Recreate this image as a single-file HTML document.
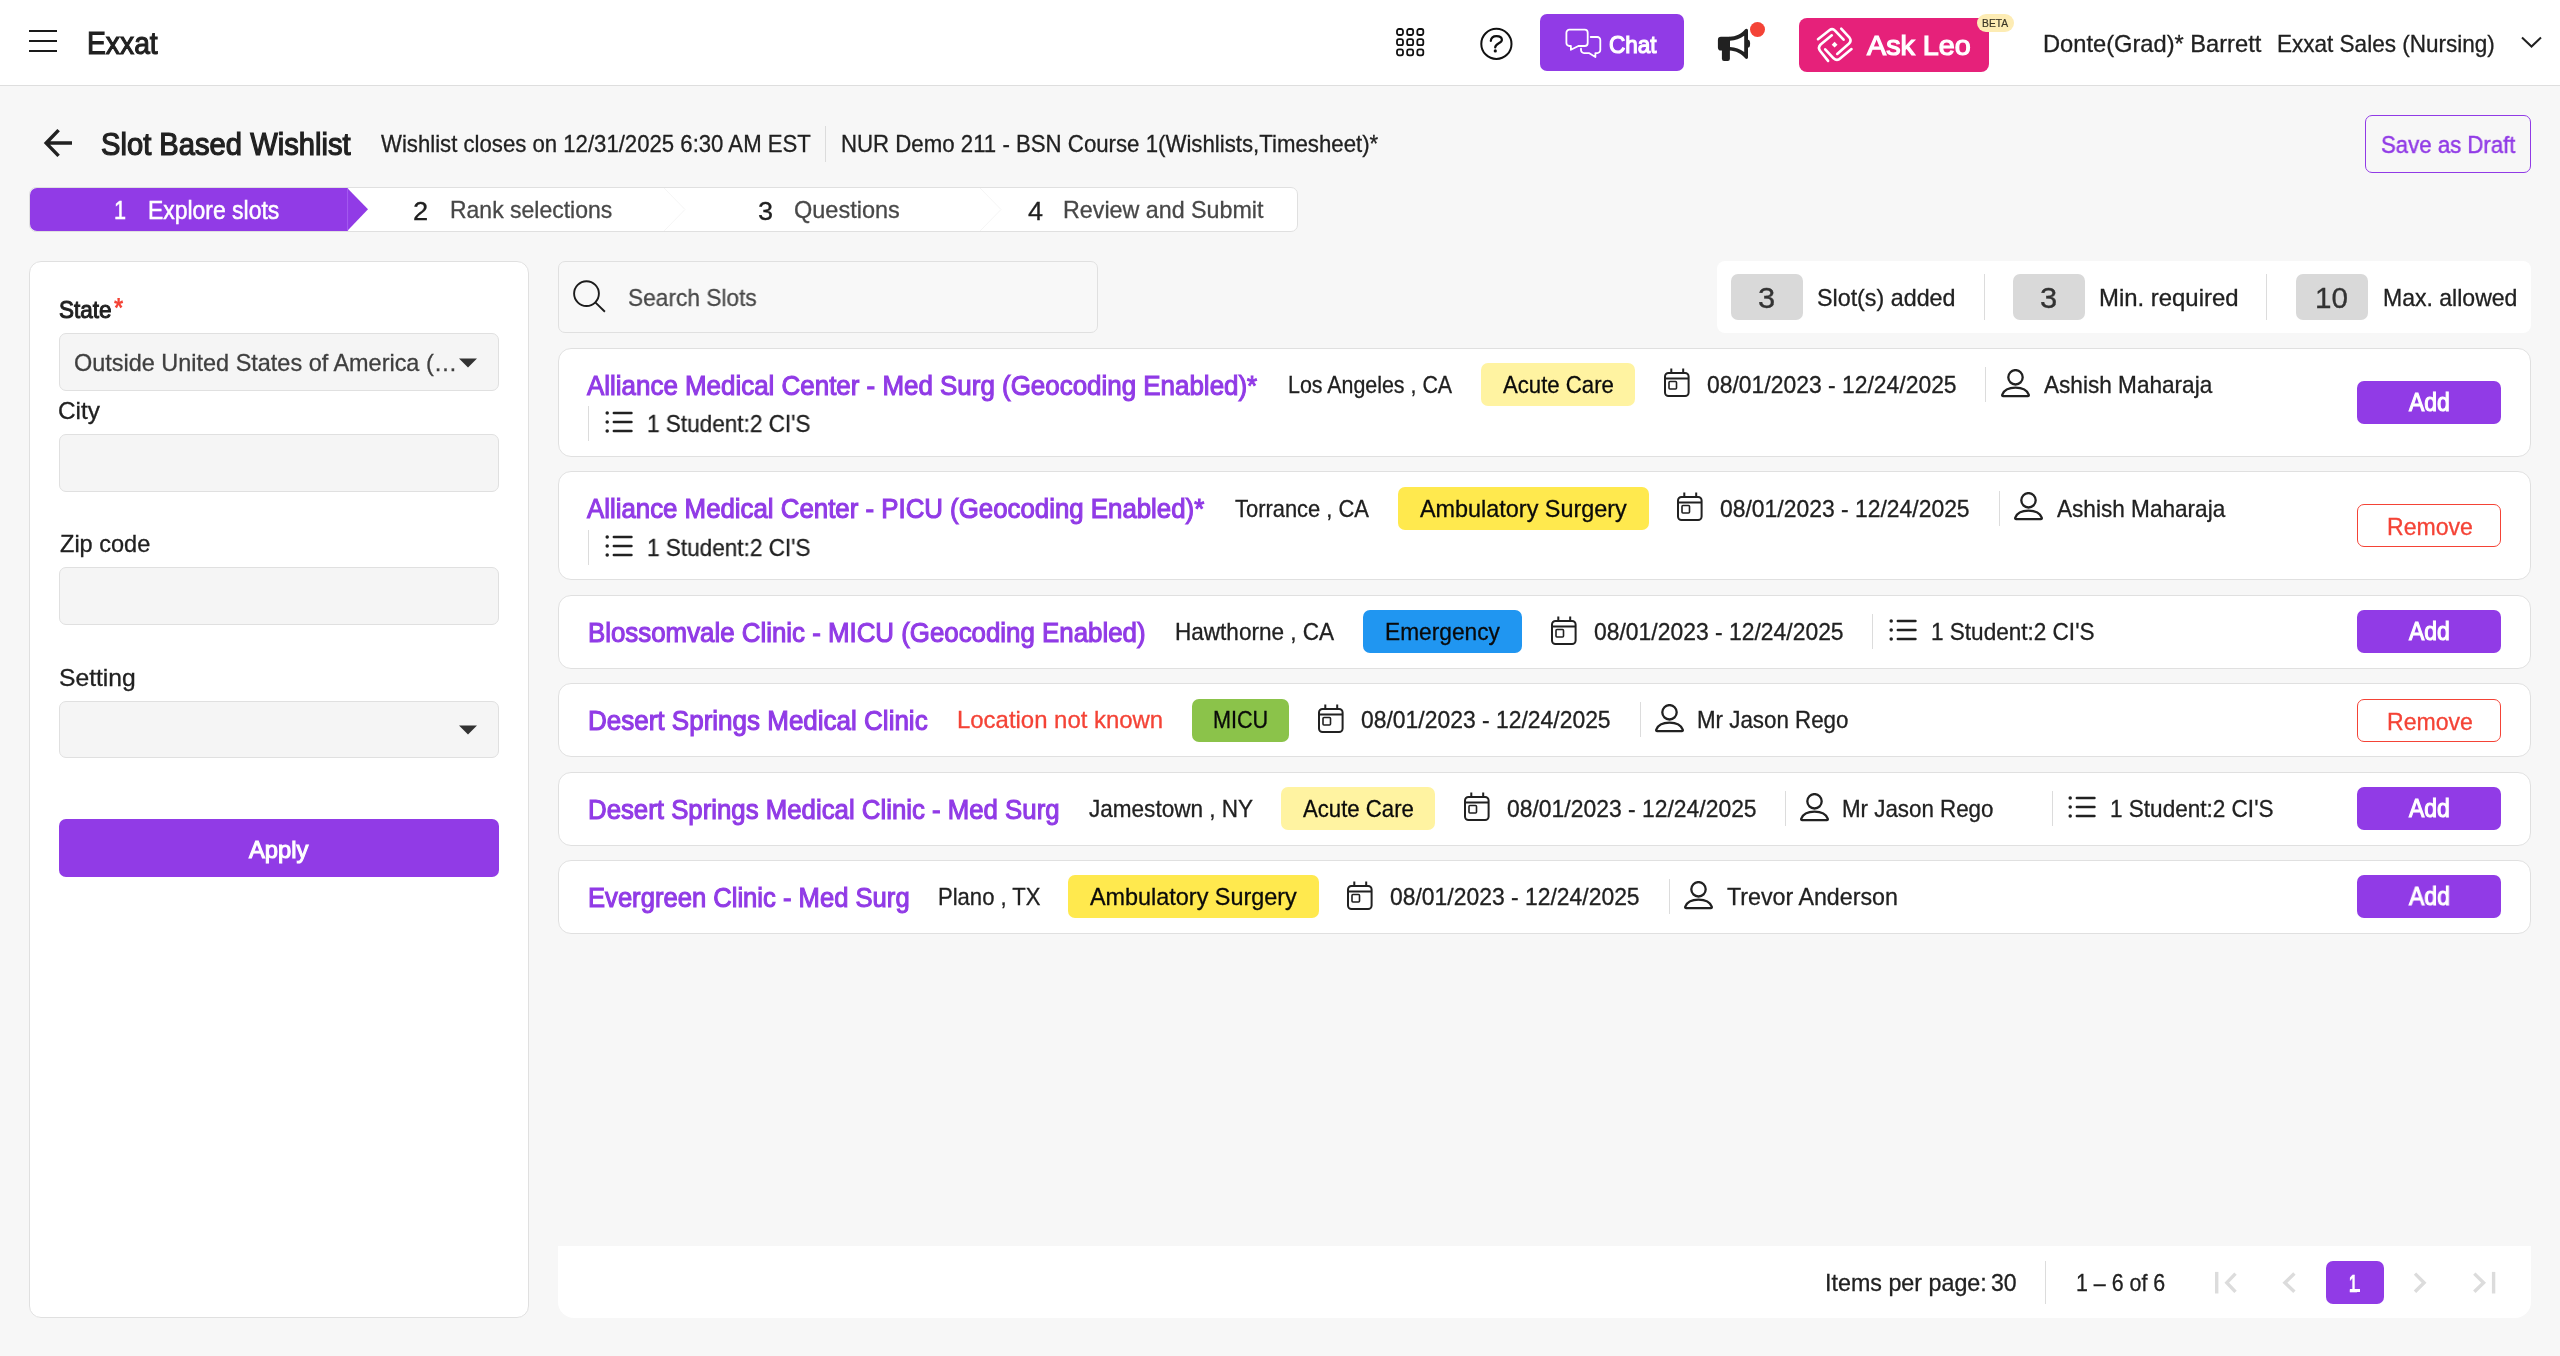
<!DOCTYPE html>
<html lang="en"><head><meta charset="utf-8"><title>Slot Based Wishlist</title>
<style>
html,body{margin:0;padding:0}
body{width:2560px;height:1356px;position:relative;overflow:hidden;background:#f7f7f7;font-family:"Liberation Sans",sans-serif;}
#app{position:absolute;left:0;top:0;width:2560px;height:1356px;will-change:transform}
.b{position:absolute;display:block}
.t{position:absolute;display:block;white-space:nowrap;transform-origin:0 0;line-height:normal}
</style></head><body>
<div id="app">
<div class="b" style="left:0px;top:0px;width:2560px;height:85px;background:#fff;"></div>
<div class="b" style="left:0px;top:85px;width:2560px;height:1px;background:#dedede;"></div>
<div class="b" style="left:29px;top:30px;width:28px;height:2px;background:#1a1a1a;"></div>
<div class="b" style="left:29px;top:40px;width:28px;height:2px;background:#1a1a1a;"></div>
<div class="b" style="left:29px;top:50px;width:28px;height:2px;background:#1a1a1a;"></div>
<span class="t" style="left:86.59px;top:26px;font-size:30.5px;color:#212121;transform:scaleX(0.9269);-webkit-text-stroke:1.1px #212121;">Exxat</span>
<svg class="b" style="left:1396px;top:27.7px;" width="29" height="29" viewBox="0 0 29 29" fill="none"><rect x="1.00" y="1.00" width="6" height="6" rx="2" stroke="#111" stroke-width="1.8"/><rect x="11.15" y="1.00" width="6" height="6" rx="2" stroke="#111" stroke-width="1.8"/><rect x="21.30" y="1.00" width="6" height="6" rx="2" stroke="#111" stroke-width="1.8"/><rect x="1.00" y="11.15" width="6" height="6" rx="2" stroke="#111" stroke-width="1.8"/><rect x="11.15" y="11.15" width="6" height="6" rx="2" stroke="#111" stroke-width="1.8"/><rect x="21.30" y="11.15" width="6" height="6" rx="2" stroke="#111" stroke-width="1.8"/><rect x="1.00" y="21.30" width="6" height="6" rx="2" stroke="#111" stroke-width="1.8"/><rect x="11.15" y="21.30" width="6" height="6" rx="2" stroke="#111" stroke-width="1.8"/><rect x="21.30" y="21.30" width="6" height="6" rx="2" stroke="#111" stroke-width="1.8"/></svg>
<svg class="b" style="left:1479px;top:27px;" width="36" height="36" viewBox="0 0 36 36" fill="none"><circle cx="17.4" cy="16.9" r="15.1" stroke="#111" stroke-width="2"/><path d="M11.8 13.8C12.2 10.6 14.6 9.1 17.4 9.1C20.6 9.1 22.9 10.6 22.9 12.9C22.9 16.3 16.2 16.4 16.2 20.5" stroke="#111" stroke-width="2.2" stroke-linecap="round" fill="none"/><circle cx="16.3" cy="23.9" r="1.6" fill="#111"/></svg>
<div class="b" style="left:1540px;top:14px;width:144px;height:57px;background:#913be6;border-radius:7px;"></div>
<svg class="b" style="left:1564px;top:27px;" width="40" height="32" viewBox="0 0 40 32" fill="none"><path d="M5.4 2.7H20.7a3 3 0 0 1 3 3V16a3 3 0 0 1-3 3H14.4L6.9 22.8V19H5.4a3 3 0 0 1-3-3V5.7a3 3 0 0 1 3-3z" stroke="#fff" stroke-width="1.8" stroke-linejoin="round"/><path d="M26.7 10H33.3a3 3 0 0 1 3 3V23.1a3 3 0 0 1-3 3H31.4V30.1L24.9 26.1H20a3 3 0 0 1-3-3V21.7" stroke="#fff" stroke-width="1.8" stroke-linejoin="round" stroke-linecap="round"/></svg>
<span class="t" style="left:1609.22px;top:31px;font-size:24.5px;color:#fff;transform:scaleX(0.9197);-webkit-text-stroke:1.2px #fff;">Chat</span>
<svg class="b" style="left:1716px;top:27px;" width="36" height="36" viewBox="0 0 36 36" fill="none"><path fill="#212121" d="M5 9.8H14V23.6H5A3.1 3.1 0 0 1 1.9 20.5V12.9A3.1 3.1 0 0 1 5 9.8Z"/><path fill="#212121" d="M5.9 22H13.9V31.7A2.2 2.2 0 0 1 11.7 33.9H8.1A2.2 2.2 0 0 1 5.9 31.7Z"/><path fill="#212121" fill-rule="evenodd" d="M13.5 9.8C20 9.6 25 7 29.2 2.3C30.4 1 32 1.8 32 3.4V30.2C32 31.8 30.4 32.6 29.2 31.3C25 26.6 20 23.8 13.5 23.6Z M13.9 13.8V19.9C19.5 20.2 24 21.9 28.2 25V8.8C24 11.8 19.5 13.5 13.9 13.8Z"/><ellipse cx="32" cy="16.7" rx="2.1" ry="3.9" fill="#212121"/></svg>
<div class="b" style="left:1750.3px;top:22.4px;width:14.4px;height:14.4px;background:#f44336;border-radius:8px;"></div>
<div class="b" style="left:1799px;top:17.5px;width:190.3px;height:54.5px;background:#e6217a;border-radius:8px;"></div>
<svg class="b" style="left:1810px;top:22px;" width="46" height="44" viewBox="0 0 46 44" fill="none"><g stroke="#fff" stroke-width="2.6" stroke-linecap="round" stroke-linejoin="round"><path d="M8 17.2 L19.4 8.3 Q22.4 6 25 8.6 L33.6 17.7"/><path d="M31.2 6.7 L39.5 15.7 Q41.9 18.8 38.8 21.8 L27.2 31.9"/><path d="M21.8 13.3 L10.6 22.5 Q7.6 25.6 10.2 29 L18.1 38.9"/><path d="M15.2 27.3 L23.6 36.3 Q27 39.6 30.4 36.3 L41.5 27.1"/></g><path d="M24.6 19.8L27.5 22.7L24.6 25.6L21.7 22.7Z" fill="#fff"/></svg>
<span class="t" style="left:1867.05px;top:31px;font-size:27px;color:#fff;transform:scaleX(1.0627);-webkit-text-stroke:1.2px #fff;">Ask Leo</span>
<div class="b" style="left:1977px;top:14px;width:36.6px;height:18px;background:#fdecb4;border-radius:9px;"></div>
<span class="t" style="left:1981.98px;top:17px;font-size:11.5px;color:#3a3526;transform:scaleX(0.8977);-webkit-text-stroke:0.2px #3a3526;">BETA</span>
<span class="t" style="left:2043.47px;top:30px;font-size:24px;color:#212121;transform:scaleX(0.9860);-webkit-text-stroke:0.3px #212121;">Donte(Grad)* Barrett</span>
<span class="t" style="left:2277.11px;top:30px;font-size:24px;color:#212121;transform:scaleX(0.9386);-webkit-text-stroke:0.3px #212121;">Exxat Sales (Nursing)</span>
<svg class="b" style="left:2520px;top:35px;" width="24" height="14" viewBox="0 0 24 14" fill="none"><path d="M2 2.5L11.5 11.5L21 2.5" stroke="#212121" stroke-width="2"/></svg>
<svg class="b" style="left:42px;top:128px;" width="32" height="32" viewBox="0 0 32 32" fill="none"><path d="M30 15.1H5M16.6 2.1L4.2 15.1L16.6 27.9" stroke="#212121" stroke-width="3.5"/></svg>
<span class="t" style="left:101.38px;top:127px;font-size:31px;color:#212121;transform:scaleX(0.9408);-webkit-text-stroke:1.2px #212121;">Slot Based Wishlist</span>
<span class="t" style="left:381.02px;top:130px;font-size:24px;color:#212121;transform:scaleX(0.9233);-webkit-text-stroke:0.3px #212121;">Wishlist closes on 12/31/2025 6:30 AM EST</span>
<div class="b" style="left:825px;top:126px;width:1px;height:36px;background:#dcdcdc;"></div>
<span class="t" style="left:840.51px;top:130px;font-size:24px;color:#212121;transform:scaleX(0.9260);-webkit-text-stroke:0.3px #212121;">NUR Demo 211 - BSN Course 1(Wishlists,Timesheet)*</span>
<div class="b" style="left:2365px;top:115px;width:166px;height:58px;border:1px solid #913be6;border-radius:7px;box-sizing:border-box;"></div>
<span class="t" style="left:2380.51px;top:131px;font-size:24.5px;color:#913be6;transform:scaleX(0.9061);-webkit-text-stroke:0.5px #913be6;">Save as Draft</span>
<div class="b" style="left:29px;top:187px;width:1269px;height:45px;background:#fff;border:1px solid #e0e0e0;border-radius:7px;box-sizing:border-box;"></div>
<div class="b" style="left:30px;top:188px;width:317.5px;height:43px;background:#913be6;border-radius:7px 0 0 7px;"></div>
<svg class="b" style="left:346px;top:188px;" width="24" height="43" viewBox="0 0 24 43" fill="none"><path d="M1.2 0L22 21.3L1.2 43Z" fill="#913be6"/><path d="M1.6 0V43" stroke="#a860f0" stroke-width="0.9"/></svg>
<span class="t" style="left:113.80px;top:196px;font-size:25px;color:#fff;transform:scaleX(0.8661);-webkit-text-stroke:0.5px #fff;">1</span>
<span class="t" style="left:147.72px;top:196px;font-size:25px;color:#fff;transform:scaleX(0.9169);-webkit-text-stroke:0.5px #fff;">Explore slots</span>
<span class="t" style="left:412.87px;top:196px;font-size:26px;color:#212121;transform:scaleX(1.0498);-webkit-text-stroke:0.3px #212121;">2</span>
<span class="t" style="left:449.69px;top:196px;font-size:24px;color:#484848;transform:scaleX(0.9574);-webkit-text-stroke:0.3px #484848;">Rank selections</span>
<span class="t" style="left:757.89px;top:196px;font-size:26px;color:#212121;transform:scaleX(1.0429);-webkit-text-stroke:0.3px #212121;">3</span>
<span class="t" style="left:793.93px;top:196px;font-size:24px;color:#484848;transform:scaleX(0.9789);-webkit-text-stroke:0.3px #484848;">Questions</span>
<span class="t" style="left:1027.80px;top:196px;font-size:26px;color:#212121;transform:scaleX(1.0373);-webkit-text-stroke:0.3px #212121;">4</span>
<span class="t" style="left:1062.68px;top:196px;font-size:24px;color:#484848;transform:scaleX(0.9696);-webkit-text-stroke:0.3px #484848;">Review and Submit</span>
<svg class="b" style="left:664px;top:188px;" width="24" height="43" viewBox="0 0 24 43" fill="none"><path d="M0 0L21 21.5L0 43" stroke="#f5f5f5" stroke-width="1" fill="#fff"/></svg>
<svg class="b" style="left:980px;top:188px;" width="24" height="43" viewBox="0 0 24 43" fill="none"><path d="M0 0L21 21.5L0 43" stroke="#f5f5f5" stroke-width="1" fill="#fff"/></svg>
<div class="b" style="left:29px;top:261px;width:500px;height:1057px;background:#fff;border:1px solid #e0e0e0;border-radius:12px;box-sizing:border-box;"></div>
<span class="t" style="left:58.89px;top:296px;font-size:24.5px;color:#212121;transform:scaleX(0.9188);-webkit-text-stroke:1.0px #212121;">State</span>
<span class="t" style="left:113.95px;top:293px;font-size:27px;color:#f44336;transform:scaleX(0.8729);font-weight:bold;">*</span>
<div class="b" style="left:59px;top:333px;width:440px;height:58px;background:#f5f5f5;border:1px solid #e0e0e0;border-radius:7px;box-sizing:border-box;"></div>
<div class="b" style="left:59px;top:434px;width:440px;height:58px;background:#f5f5f5;border:1px solid #e0e0e0;border-radius:7px;box-sizing:border-box;"></div>
<div class="b" style="left:59px;top:567px;width:440px;height:58px;background:#f5f5f5;border:1px solid #e0e0e0;border-radius:7px;box-sizing:border-box;"></div>
<div class="b" style="left:59px;top:701px;width:440px;height:57px;background:#f5f5f5;border:1px solid #e0e0e0;border-radius:7px;box-sizing:border-box;"></div>
<span class="t" style="left:73.74px;top:349px;font-size:24px;color:#3f3f3f;transform:scaleX(0.9771);-webkit-text-stroke:0.3px #3f3f3f;">Outside United States of America (…</span>
<svg class="b" style="left:458px;top:358px;" width="20" height="10" viewBox="0 0 20 10" fill="none"><path d="M1 0.5H19L10 9.5Z" fill="#333"/></svg>
<svg class="b" style="left:458px;top:724.5px;" width="20" height="10" viewBox="0 0 20 10" fill="none"><path d="M1 0.5H19L10 9.5Z" fill="#333"/></svg>
<span class="t" style="left:58.39px;top:397px;font-size:24px;color:#212121;transform:scaleX(1.0142);-webkit-text-stroke:0.3px #212121;">City</span>
<span class="t" style="left:59.74px;top:530px;font-size:24px;color:#212121;transform:scaleX(0.9808);-webkit-text-stroke:0.3px #212121;">Zip code</span>
<span class="t" style="left:58.87px;top:664px;font-size:24px;color:#212121;transform:scaleX(1.0269);-webkit-text-stroke:0.3px #212121;">Setting</span>
<div class="b" style="left:59px;top:819px;width:440px;height:58px;background:#913be6;border-radius:7px;"></div>
<span class="t" style="left:249.10px;top:836px;font-size:24.5px;color:#fff;transform:scaleX(0.9703);-webkit-text-stroke:1.1px #fff;">Apply</span>
<div class="b" style="left:558px;top:261px;width:540px;height:72px;background:#f8f8f8;border:1px solid #e0e0e0;border-radius:7px;box-sizing:border-box;"></div>
<svg class="b" style="left:571px;top:277px;" width="40" height="40" viewBox="0 0 40 40" fill="none"><circle cx="15.5" cy="16.6" r="12.4" stroke="#1c1c1c" stroke-width="1.9"/><path d="M24.3 25.4L33.9 34.8" stroke="#1c1c1c" stroke-width="1.9"/></svg>
<span class="t" style="left:627.50px;top:284px;font-size:24px;color:#484848;transform:scaleX(0.9459);-webkit-text-stroke:0.3px #484848;">Search Slots</span>
<div class="b" style="left:1717px;top:261px;width:814px;height:72px;background:#fff;border-radius:8px;"></div>
<div class="b" style="left:1731px;top:274px;width:72px;height:46px;background:#d9d9d9;border-radius:7px;"></div>
<span class="t" style="left:1758.33px;top:282px;font-size:29px;color:#333;transform:scaleX(1.0656);-webkit-text-stroke:0.3px #333;">3</span>
<span class="t" style="left:1816.68px;top:284px;font-size:24px;color:#212121;transform:scaleX(0.9701);-webkit-text-stroke:0.3px #212121;">Slot(s) added</span>
<div class="b" style="left:2013px;top:274px;width:72px;height:46px;background:#d9d9d9;border-radius:7px;"></div>
<span class="t" style="left:2040.33px;top:282px;font-size:29px;color:#333;transform:scaleX(1.0656);-webkit-text-stroke:0.3px #333;">3</span>
<span class="t" style="left:2098.97px;top:284px;font-size:24px;color:#212121;transform:scaleX(0.9962);-webkit-text-stroke:0.3px #212121;">Min. required</span>
<div class="b" style="left:2296px;top:274px;width:72px;height:46px;background:#d9d9d9;border-radius:7px;"></div>
<span class="t" style="left:2314.91px;top:282px;font-size:29px;color:#333;transform:scaleX(1.0216);-webkit-text-stroke:0.3px #333;">10</span>
<span class="t" style="left:2382.69px;top:284px;font-size:24px;color:#212121;transform:scaleX(0.9597);-webkit-text-stroke:0.3px #212121;">Max. allowed</span>
<div class="b" style="left:1984px;top:274px;width:1px;height:46px;background:#dcdcdc;"></div>
<div class="b" style="left:2266px;top:274px;width:1px;height:46px;background:#dcdcdc;"></div>
<div class="b" style="left:558px;top:348px;width:1973px;height:109px;background:#fff;border:1px solid #e0e0e0;border-radius:13px;box-sizing:border-box;"></div>
<span class="t" style="left:587.29px;top:370px;font-size:27.5px;color:#913be6;transform:scaleX(0.9429);-webkit-text-stroke:1.1px #913be6;">Alliance Medical Center - Med Surg (Geocoding Enabled)*</span>
<span class="t" style="left:1287.74px;top:371px;font-size:24px;color:#212121;transform:scaleX(0.8913);-webkit-text-stroke:0.3px #212121;">Los Angeles , CA</span>
<div class="b" style="left:1481px;top:363px;width:154px;height:43px;background:#fff3a1;border-radius:7px;"></div>
<span class="t" style="left:1502.91px;top:371px;font-size:24px;color:#0a0a0a;transform:scaleX(0.9233);-webkit-text-stroke:0.3px #0a0a0a;">Acute Care</span>
<svg class="b" style="left:1663.5px;top:368.3px;" width="28" height="30" viewBox="0 0 28 30" fill="none"><rect x="1" y="5" width="23.6" height="23" rx="3.5" stroke="#212121" stroke-width="2"/><path d="M1 10.5H24.6M7.3 0.5V5M19.2 0.5V5" stroke="#212121" stroke-width="2"/><rect x="5" y="13.5" width="7.5" height="7.5" rx="1" stroke="#212121" stroke-width="1.6"/></svg>
<span class="t" style="left:1706.97px;top:371px;font-size:24px;color:#212121;transform:scaleX(0.9543);-webkit-text-stroke:0.3px #212121;">08/01/2023 - 12/24/2025</span>
<div class="b" style="left:1985px;top:367px;width:1px;height:35px;background:#dcdcdc;"></div>
<svg class="b" style="left:2000.5px;top:368.6px;" width="30" height="30" viewBox="0 0 30 30" fill="none"><circle cx="14.5" cy="8.3" r="7.2" stroke="#212121" stroke-width="2.3"/><path d="M2.2 27.2 C1.3 27.2 1 26.4 1.3 25.6 C3 21 8 18.6 14.5 18.6 C21 18.6 26 21 27.7 25.6 C28 26.4 27.7 27.2 26.8 27.2 Z" stroke="#212121" stroke-width="2.3" stroke-linejoin="round"/></svg>
<span class="t" style="left:2043.92px;top:371px;font-size:24px;color:#212121;transform:scaleX(0.9411);-webkit-text-stroke:0.3px #212121;">Ashish Maharaja</span>
<div class="b" style="left:2357px;top:381px;width:144px;height:43px;background:#913be6;border-radius:7px;"></div>
<span class="t" style="left:2408.99px;top:388px;font-size:25.5px;color:#fff;transform:scaleX(0.9005);-webkit-text-stroke:1.1px #fff;">Add</span>
<div class="b" style="left:588px;top:406px;width:1px;height:35px;background:#dcdcdc;"></div>
<svg class="b" style="left:604.5px;top:409.1px;" width="30" height="26" viewBox="0 0 30 26" fill="none"><path d="M8.8 4H26.5M8.8 13H26.5M8.8 22H26.5" stroke="#212121" stroke-width="2.4" stroke-linecap="round"/><circle cx="2.2" cy="4" r="1.75" fill="#212121"/><circle cx="2.2" cy="13" r="1.75" fill="#212121"/><circle cx="2.2" cy="22" r="1.75" fill="#212121"/></svg>
<span class="t" style="left:646.65px;top:410px;font-size:24px;color:#212121;transform:scaleX(0.9394);-webkit-text-stroke:0.3px #212121;">1 Student:2 CI&#x27;S</span>
<div class="b" style="left:558px;top:471px;width:1973px;height:109px;background:#fff;border:1px solid #e0e0e0;border-radius:13px;box-sizing:border-box;"></div>
<span class="t" style="left:587.29px;top:493px;font-size:27.5px;color:#913be6;transform:scaleX(0.9391);-webkit-text-stroke:1.1px #913be6;">Alliance Medical Center - PICU (Geocoding Enabled)*</span>
<span class="t" style="left:1234.84px;top:495px;font-size:24px;color:#212121;transform:scaleX(0.9127);-webkit-text-stroke:0.3px #212121;">Torrance , CA</span>
<div class="b" style="left:1398px;top:487px;width:251px;height:43px;background:#ffe94e;border-radius:7px;"></div>
<span class="t" style="left:1419.91px;top:495px;font-size:24px;color:#0a0a0a;transform:scaleX(0.9749);-webkit-text-stroke:0.3px #0a0a0a;">Ambulatory Surgery</span>
<svg class="b" style="left:1677px;top:491.99999999999994px;" width="28" height="30" viewBox="0 0 28 30" fill="none"><rect x="1" y="5" width="23.6" height="23" rx="3.5" stroke="#212121" stroke-width="2"/><path d="M1 10.5H24.6M7.3 0.5V5M19.2 0.5V5" stroke="#212121" stroke-width="2"/><rect x="5" y="13.5" width="7.5" height="7.5" rx="1" stroke="#212121" stroke-width="1.6"/></svg>
<span class="t" style="left:1720.47px;top:495px;font-size:24px;color:#212121;transform:scaleX(0.9543);-webkit-text-stroke:0.3px #212121;">08/01/2023 - 12/24/2025</span>
<div class="b" style="left:1999px;top:491px;width:1px;height:35px;background:#dcdcdc;"></div>
<svg class="b" style="left:2014px;top:492.29999999999995px;" width="30" height="30" viewBox="0 0 30 30" fill="none"><circle cx="14.5" cy="8.3" r="7.2" stroke="#212121" stroke-width="2.3"/><path d="M2.2 27.2 C1.3 27.2 1 26.4 1.3 25.6 C3 21 8 18.6 14.5 18.6 C21 18.6 26 21 27.7 25.6 C28 26.4 27.7 27.2 26.8 27.2 Z" stroke="#212121" stroke-width="2.3" stroke-linejoin="round"/></svg>
<span class="t" style="left:2057.42px;top:495px;font-size:24px;color:#212121;transform:scaleX(0.9411);-webkit-text-stroke:0.3px #212121;">Ashish Maharaja</span>
<div class="b" style="left:2357px;top:504px;width:144px;height:43px;background:#fff;border:1px solid #f44336;border-radius:7px;box-sizing:border-box;"></div>
<span class="t" style="left:2386.85px;top:513px;font-size:24px;color:#f44336;transform:scaleX(0.9619);-webkit-text-stroke:0.3px #f44336;">Remove</span>
<div class="b" style="left:588px;top:530px;width:1px;height:35px;background:#dcdcdc;"></div>
<svg class="b" style="left:604.5px;top:532.8px;" width="30" height="26" viewBox="0 0 30 26" fill="none"><path d="M8.8 4H26.5M8.8 13H26.5M8.8 22H26.5" stroke="#212121" stroke-width="2.4" stroke-linecap="round"/><circle cx="2.2" cy="4" r="1.75" fill="#212121"/><circle cx="2.2" cy="13" r="1.75" fill="#212121"/><circle cx="2.2" cy="22" r="1.75" fill="#212121"/></svg>
<span class="t" style="left:646.65px;top:534px;font-size:24px;color:#212121;transform:scaleX(0.9394);-webkit-text-stroke:0.3px #212121;">1 Student:2 CI&#x27;S</span>
<div class="b" style="left:558px;top:595px;width:1973px;height:74px;background:#fff;border:1px solid #e0e0e0;border-radius:13px;box-sizing:border-box;"></div>
<span class="t" style="left:588.19px;top:617px;font-size:27.5px;color:#913be6;transform:scaleX(0.9402);-webkit-text-stroke:1.1px #913be6;">Blossomvale Clinic - MICU (Geocoding Enabled)</span>
<span class="t" style="left:1174.71px;top:618px;font-size:24px;color:#212121;transform:scaleX(0.9394);-webkit-text-stroke:0.3px #212121;">Hawthorne , CA</span>
<div class="b" style="left:1363px;top:610px;width:159px;height:43px;background:#2096f1;border-radius:7px;"></div>
<span class="t" style="left:1384.99px;top:618px;font-size:24px;color:#0a0a0a;transform:scaleX(0.9461);-webkit-text-stroke:0.3px #0a0a0a;">Emergency</span>
<svg class="b" style="left:1550.5px;top:615.5px;" width="28" height="30" viewBox="0 0 28 30" fill="none"><rect x="1" y="5" width="23.6" height="23" rx="3.5" stroke="#212121" stroke-width="2"/><path d="M1 10.5H24.6M7.3 0.5V5M19.2 0.5V5" stroke="#212121" stroke-width="2"/><rect x="5" y="13.5" width="7.5" height="7.5" rx="1" stroke="#212121" stroke-width="1.6"/></svg>
<span class="t" style="left:1593.97px;top:618px;font-size:24px;color:#212121;transform:scaleX(0.9543);-webkit-text-stroke:0.3px #212121;">08/01/2023 - 12/24/2025</span>
<div class="b" style="left:1872px;top:614px;width:1px;height:35px;background:#dcdcdc;"></div>
<svg class="b" style="left:1888.5px;top:617.3px;" width="30" height="26" viewBox="0 0 30 26" fill="none"><path d="M8.8 4H26.5M8.8 13H26.5M8.8 22H26.5" stroke="#212121" stroke-width="2.4" stroke-linecap="round"/><circle cx="2.2" cy="4" r="1.75" fill="#212121"/><circle cx="2.2" cy="13" r="1.75" fill="#212121"/><circle cx="2.2" cy="22" r="1.75" fill="#212121"/></svg>
<span class="t" style="left:1930.65px;top:618px;font-size:24px;color:#212121;transform:scaleX(0.9394);-webkit-text-stroke:0.3px #212121;">1 Student:2 CI&#x27;S</span>
<div class="b" style="left:2357px;top:610px;width:144px;height:43px;background:#913be6;border-radius:7px;"></div>
<span class="t" style="left:2408.99px;top:617px;font-size:25.5px;color:#fff;transform:scaleX(0.9005);-webkit-text-stroke:1.1px #fff;">Add</span>
<div class="b" style="left:558px;top:683px;width:1973px;height:74px;background:#fff;border:1px solid #e0e0e0;border-radius:13px;box-sizing:border-box;"></div>
<span class="t" style="left:588.19px;top:705px;font-size:27.5px;color:#913be6;transform:scaleX(0.9457);-webkit-text-stroke:1.1px #913be6;">Desert Springs Medical Clinic</span>
<span class="t" style="left:957.23px;top:706px;font-size:24px;color:#f44336;transform:scaleX(0.9969);-webkit-text-stroke:0.3px #f44336;">Location not known</span>
<div class="b" style="left:1192px;top:699px;width:97px;height:43px;background:#8bc34a;border-radius:7px;"></div>
<span class="t" style="left:1213.23px;top:706px;font-size:24px;color:#0a0a0a;transform:scaleX(0.9007);-webkit-text-stroke:0.3px #0a0a0a;">MICU</span>
<svg class="b" style="left:1317.5px;top:703.6px;" width="28" height="30" viewBox="0 0 28 30" fill="none"><rect x="1" y="5" width="23.6" height="23" rx="3.5" stroke="#212121" stroke-width="2"/><path d="M1 10.5H24.6M7.3 0.5V5M19.2 0.5V5" stroke="#212121" stroke-width="2"/><rect x="5" y="13.5" width="7.5" height="7.5" rx="1" stroke="#212121" stroke-width="1.6"/></svg>
<span class="t" style="left:1360.97px;top:706px;font-size:24px;color:#212121;transform:scaleX(0.9543);-webkit-text-stroke:0.3px #212121;">08/01/2023 - 12/24/2025</span>
<div class="b" style="left:1640px;top:702px;width:1px;height:35px;background:#dcdcdc;"></div>
<svg class="b" style="left:1654.5px;top:703.9px;" width="30" height="30" viewBox="0 0 30 30" fill="none"><circle cx="14.5" cy="8.3" r="7.2" stroke="#212121" stroke-width="2.3"/><path d="M2.2 27.2 C1.3 27.2 1 26.4 1.3 25.6 C3 21 8 18.6 14.5 18.6 C21 18.6 26 21 27.7 25.6 C28 26.4 27.7 27.2 26.8 27.2 Z" stroke="#212121" stroke-width="2.3" stroke-linejoin="round"/></svg>
<span class="t" style="left:1696.71px;top:706px;font-size:24px;color:#212121;transform:scaleX(0.9304);-webkit-text-stroke:0.3px #212121;">Mr Jason Rego</span>
<div class="b" style="left:2357px;top:699px;width:144px;height:43px;background:#fff;border:1px solid #f44336;border-radius:7px;box-sizing:border-box;"></div>
<span class="t" style="left:2386.85px;top:708px;font-size:24px;color:#f44336;transform:scaleX(0.9619);-webkit-text-stroke:0.3px #f44336;">Remove</span>
<div class="b" style="left:558px;top:772px;width:1973px;height:74px;background:#fff;border:1px solid #e0e0e0;border-radius:13px;box-sizing:border-box;"></div>
<span class="t" style="left:588.21px;top:794px;font-size:27.5px;color:#913be6;transform:scaleX(0.9379);-webkit-text-stroke:1.1px #913be6;">Desert Springs Medical Clinic - Med Surg</span>
<span class="t" style="left:1088.78px;top:795px;font-size:24px;color:#212121;transform:scaleX(0.9390);-webkit-text-stroke:0.3px #212121;">Jamestown , NY</span>
<div class="b" style="left:1281px;top:787px;width:154px;height:43px;background:#fff3a1;border-radius:7px;"></div>
<span class="t" style="left:1302.91px;top:795px;font-size:24px;color:#0a0a0a;transform:scaleX(0.9233);-webkit-text-stroke:0.3px #0a0a0a;">Acute Care</span>
<svg class="b" style="left:1463.5px;top:792.2px;" width="28" height="30" viewBox="0 0 28 30" fill="none"><rect x="1" y="5" width="23.6" height="23" rx="3.5" stroke="#212121" stroke-width="2"/><path d="M1 10.5H24.6M7.3 0.5V5M19.2 0.5V5" stroke="#212121" stroke-width="2"/><rect x="5" y="13.5" width="7.5" height="7.5" rx="1" stroke="#212121" stroke-width="1.6"/></svg>
<span class="t" style="left:1506.97px;top:795px;font-size:24px;color:#212121;transform:scaleX(0.9543);-webkit-text-stroke:0.3px #212121;">08/01/2023 - 12/24/2025</span>
<div class="b" style="left:1785px;top:791px;width:1px;height:35px;background:#dcdcdc;"></div>
<svg class="b" style="left:1800px;top:792.5px;" width="30" height="30" viewBox="0 0 30 30" fill="none"><circle cx="14.5" cy="8.3" r="7.2" stroke="#212121" stroke-width="2.3"/><path d="M2.2 27.2 C1.3 27.2 1 26.4 1.3 25.6 C3 21 8 18.6 14.5 18.6 C21 18.6 26 21 27.7 25.6 C28 26.4 27.7 27.2 26.8 27.2 Z" stroke="#212121" stroke-width="2.3" stroke-linejoin="round"/></svg>
<span class="t" style="left:1842.21px;top:795px;font-size:24px;color:#212121;transform:scaleX(0.9304);-webkit-text-stroke:0.3px #212121;">Mr Jason Rego</span>
<div class="b" style="left:2051.5px;top:791px;width:1px;height:35px;background:#dcdcdc;"></div>
<svg class="b" style="left:2068px;top:794.0px;" width="30" height="26" viewBox="0 0 30 26" fill="none"><path d="M8.8 4H26.5M8.8 13H26.5M8.8 22H26.5" stroke="#212121" stroke-width="2.4" stroke-linecap="round"/><circle cx="2.2" cy="4" r="1.75" fill="#212121"/><circle cx="2.2" cy="13" r="1.75" fill="#212121"/><circle cx="2.2" cy="22" r="1.75" fill="#212121"/></svg>
<span class="t" style="left:2110.15px;top:795px;font-size:24px;color:#212121;transform:scaleX(0.9394);-webkit-text-stroke:0.3px #212121;">1 Student:2 CI&#x27;S</span>
<div class="b" style="left:2357px;top:787px;width:144px;height:43px;background:#913be6;border-radius:7px;"></div>
<span class="t" style="left:2408.99px;top:794px;font-size:25.5px;color:#fff;transform:scaleX(0.9005);-webkit-text-stroke:1.1px #fff;">Add</span>
<div class="b" style="left:558px;top:860px;width:1973px;height:74px;background:#fff;border:1px solid #e0e0e0;border-radius:13px;box-sizing:border-box;"></div>
<span class="t" style="left:588.21px;top:882px;font-size:27.5px;color:#913be6;transform:scaleX(0.9311);-webkit-text-stroke:1.1px #913be6;">Evergreen Clinic - Med Surg</span>
<span class="t" style="left:937.72px;top:883px;font-size:24px;color:#212121;transform:scaleX(0.9187);-webkit-text-stroke:0.3px #212121;">Plano , TX</span>
<div class="b" style="left:1068px;top:875px;width:251px;height:43px;background:#ffe94e;border-radius:7px;"></div>
<span class="t" style="left:1089.91px;top:883px;font-size:24px;color:#0a0a0a;transform:scaleX(0.9749);-webkit-text-stroke:0.3px #0a0a0a;">Ambulatory Surgery</span>
<svg class="b" style="left:1346.5px;top:880.5px;" width="28" height="30" viewBox="0 0 28 30" fill="none"><rect x="1" y="5" width="23.6" height="23" rx="3.5" stroke="#212121" stroke-width="2"/><path d="M1 10.5H24.6M7.3 0.5V5M19.2 0.5V5" stroke="#212121" stroke-width="2"/><rect x="5" y="13.5" width="7.5" height="7.5" rx="1" stroke="#212121" stroke-width="1.6"/></svg>
<span class="t" style="left:1389.97px;top:883px;font-size:24px;color:#212121;transform:scaleX(0.9543);-webkit-text-stroke:0.3px #212121;">08/01/2023 - 12/24/2025</span>
<div class="b" style="left:1669px;top:879px;width:1px;height:35px;background:#dcdcdc;"></div>
<svg class="b" style="left:1684px;top:880.8px;" width="30" height="30" viewBox="0 0 30 30" fill="none"><circle cx="14.5" cy="8.3" r="7.2" stroke="#212121" stroke-width="2.3"/><path d="M2.2 27.2 C1.3 27.2 1 26.4 1.3 25.6 C3 21 8 18.6 14.5 18.6 C21 18.6 26 21 27.7 25.6 C28 26.4 27.7 27.2 26.8 27.2 Z" stroke="#212121" stroke-width="2.3" stroke-linejoin="round"/></svg>
<span class="t" style="left:1727.33px;top:883px;font-size:24px;color:#212121;transform:scaleX(0.9680);-webkit-text-stroke:0.3px #212121;">Trevor Anderson</span>
<div class="b" style="left:2357px;top:875px;width:144px;height:43px;background:#913be6;border-radius:7px;"></div>
<span class="t" style="left:2408.99px;top:882px;font-size:25.5px;color:#fff;transform:scaleX(0.9005);-webkit-text-stroke:1.1px #fff;">Add</span>
<div class="b" style="left:558px;top:1246px;width:1973px;height:72px;background:#fff;border-radius:0 0 16px 16px;"></div>
<span class="t" style="left:1824.93px;top:1269px;font-size:24px;color:#212121;transform:scaleX(0.9702);-webkit-text-stroke:0.3px #212121;">Items per page:</span>
<span class="t" style="left:1991.42px;top:1269px;font-size:24px;color:#212121;transform:scaleX(0.9599);-webkit-text-stroke:0.3px #212121;">30</span>
<div class="b" style="left:2045px;top:1261px;width:1px;height:43px;background:#dcdcdc;"></div>
<span class="t" style="left:2075.79px;top:1269px;font-size:24px;color:#212121;transform:scaleX(0.8918);-webkit-text-stroke:0.3px #212121;">1 – 6 of 6</span>
<svg class="b" style="left:2212px;top:1266px;" width="28" height="34" viewBox="0 0 28 34" fill="none"><path d="M4.7 5.9V27.5" stroke="#dcdcdc" stroke-width="3.4"/><path d="M23.5 7.6L14.8 16.7L23.5 25.8" stroke="#dcdcdc" stroke-width="3.4"/></svg>
<svg class="b" style="left:2279px;top:1266px;" width="20" height="34" viewBox="0 0 20 34" fill="none"><path d="M15.4 7.6L5.9 16.7L15.4 25.8" stroke="#dcdcdc" stroke-width="3.4"/></svg>
<div class="b" style="left:2326px;top:1261px;width:58px;height:43px;background:#913be6;border-radius:7px;"></div>
<span class="t" style="left:2348.97px;top:1270px;font-size:24.5px;color:#fff;transform:scaleX(0.6143);font-weight:bold;-webkit-text-stroke:0.3px #fff;">1</span>
<div class="b" style="left:2349.8px;top:1289.2px;width:10.4px;height:2.8px;background:#fff;"></div>
<svg class="b" style="left:2411px;top:1266px;" width="20" height="34" viewBox="0 0 20 34" fill="none"><path d="M4 7.6L13.1 16.7L4 25.8" stroke="#dcdcdc" stroke-width="3.4"/></svg>
<svg class="b" style="left:2470px;top:1266px;" width="28" height="34" viewBox="0 0 28 34" fill="none"><path d="M4.3 7.6L13.6 16.7L4.3 25.8" stroke="#dcdcdc" stroke-width="3.4"/><path d="M23.6 5.9V27.5" stroke="#dcdcdc" stroke-width="3.4"/></svg>
</div>
</body></html>
